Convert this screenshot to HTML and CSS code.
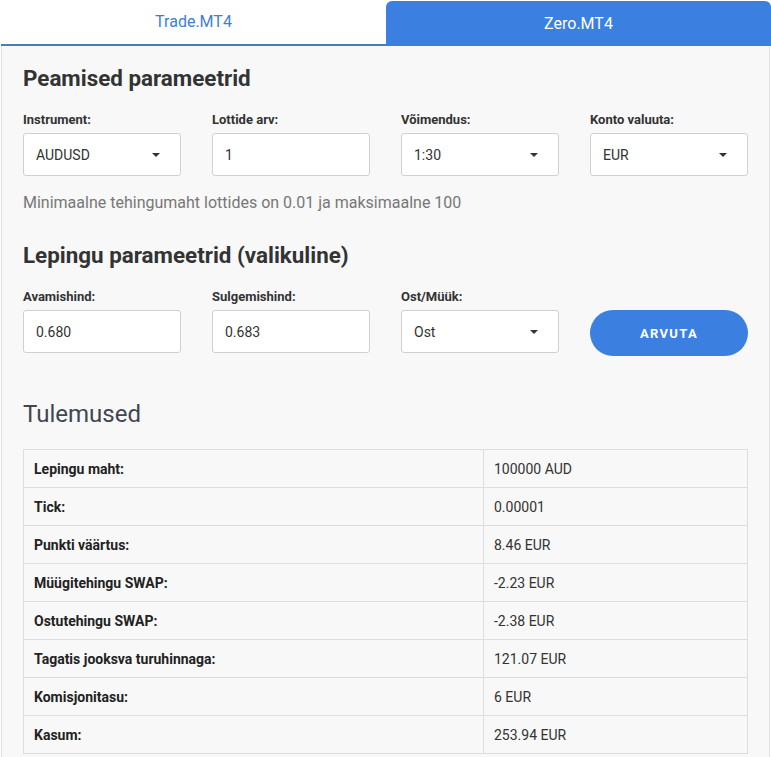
FILE: index.html
```html
<!DOCTYPE html>
<html lang="et">
<head>
  <meta charset="UTF-8" />
  <meta name="viewport" content="width=device-width, initial-scale=1.0" />
  <title>Kalkulaator</title>
  <link rel="stylesheet" href="styles.css">
</head>
<body>
  <div class="tabs">
    <div class="tab">Trade.MT4</div>
    <div class="tab active">Zero.MT4</div>
  </div>

  <div class="panel">
    <h2>Peamised parameetrid</h2>
    <div class="row">
      <div class="field">
        <label>Instrument:</label>
        <div class="box select">AUDUSD<span class="caret"></span></div>
      </div>
      <div class="field">
        <label>Lottide arv:</label>
        <div class="box">1</div>
      </div>
      <div class="field">
        <label>Võimendus:</label>
        <div class="box select">1:30<span class="caret"></span></div>
      </div>
      <div class="field">
        <label>Konto valuuta:</label>
        <div class="box select">EUR<span class="caret"></span></div>
      </div>
    </div>
    <p class="hint">Minimaalne tehingumaht lottides on 0.01 ja maksimaalne 100</p>

    <h2 class="second">Lepingu parameetrid (valikuline)</h2>
    <div class="row">
      <div class="field">
        <label>Avamishind:</label>
        <div class="box">0.680</div>
      </div>
      <div class="field">
        <label>Sulgemishind:</label>
        <div class="box">0.683</div>
      </div>
      <div class="field">
        <label>Ost/Müük:</label>
        <div class="box select">Ost<span class="caret"></span></div>
      </div>
      <div class="field">
        <label>&nbsp;</label>
        <button class="calc">ARVUTA</button>
      </div>
    </div>

    <h3>Tulemused</h3>
    <table class="results">
      <tr><th>Lepingu maht:</th><td>100000 AUD</td></tr>
      <tr><th>Tick:</th><td>0.00001</td></tr>
      <tr><th>Punkti väärtus:</th><td>8.46 EUR</td></tr>
      <tr><th>Müügitehingu SWAP:</th><td>-2.23 EUR</td></tr>
      <tr><th>Ostutehingu SWAP:</th><td>-2.38 EUR</td></tr>
      <tr><th>Tagatis jooksva turuhinnaga:</th><td>121.07 EUR</td></tr>
      <tr><th>Komisjonitasu:</th><td>6 EUR</td></tr>
      <tr><th>Kasum:</th><td>253.94 EUR</td></tr>
    </table>
  </div>
</body>
</html>
```

FILE: styles.css
```css
body {
  margin: 0;
  background-color: #ffffff;
  font-family: Roboto, 'Liberation Sans', sans-serif;
  color: #333333;
}
.tabs {
  display: flex;
  height: 46px;
  padding-left: 1px;
  padding-top: 1px;
  box-sizing: border-box;
}
.tab {
  flex: 1;
  display: flex;
  align-items: center;
  justify-content: center;
  font-size: 16px;
  color: #3d7fd0;
  background-color: #ffffff;
  border-bottom: 2px solid #4a7db5;
  padding-bottom: 2px;
}
.tab.active {
  background-color: #3b7fe0;
  color: #ffffff;
  border-bottom: none;
  border-radius: 6px 6px 0 0;
  padding-bottom: 0;
}
.panel {
  background-color: #f8f8f8;
  margin: 0 1px 0 1px;
  border-left: 1px solid #e2e2e2;
  border-right: 1px solid #e2e2e2;
  padding: 20px 21px 20px 21px;
}
h2 {
  margin: 0;
  font-size: 22.4px;
  font-weight: 700;
  line-height: 24px;
  color: #333333;
}
h2.second {
  margin-top: 31px;
}
.row {
  display: grid;
  grid-template-columns: repeat(4, 1fr);
  column-gap: 31px;
  margin-top: 22px;
}
.field label {
  display: block;
  font-size: 13px;
  font-weight: 700;
  line-height: 15px;
  margin-bottom: 6px;
  color: #333333;
}
.box {
  height: 43px;
  box-sizing: border-box;
  background-color: #ffffff;
  border: 1px solid #d0d0d0;
  border-radius: 3px;
  padding: 0 12px;
  display: flex;
  align-items: center;
  font-size: 14px;
  color: #333333;
}
.select {
  justify-content: space-between;
}
.caret {
  width: 0;
  height: 0;
  border-left: 4px solid transparent;
  border-right: 4px solid transparent;
  border-top: 4px solid #333333;
  margin-right: 8px;
}
.calc {
  width: 100%;
  height: 46px;
  border: none;
  border-radius: 23px;
  background-color: #3b7fe0;
  color: #ffffff;
  font-family: Roboto, 'Liberation Sans', sans-serif;
  font-size: 13px;
  font-weight: 700;
  letter-spacing: 1.3px;
  cursor: pointer;
}
.hint {
  margin: 18px 0 0;
  font-size: 16px;
  line-height: 18px;
  color: #777777;
}
h3 {
  margin: 44px 0 0;
  font-size: 24px;
  font-weight: 400;
  line-height: 28px;
  color: #3f4650;
}
.results {
  width: 100%;
  margin-top: 21px;
  border-collapse: collapse;
  font-size: 14px;
}
.results th, .results td {
  border: 1px solid #dddddd;
  height: 37px;
  padding: 0 10px;
  text-align: left;
}
.results th {
  width: 439px;
  font-weight: 700;
  color: #222222;
}
.results td {
  color: #333333;
}
```
